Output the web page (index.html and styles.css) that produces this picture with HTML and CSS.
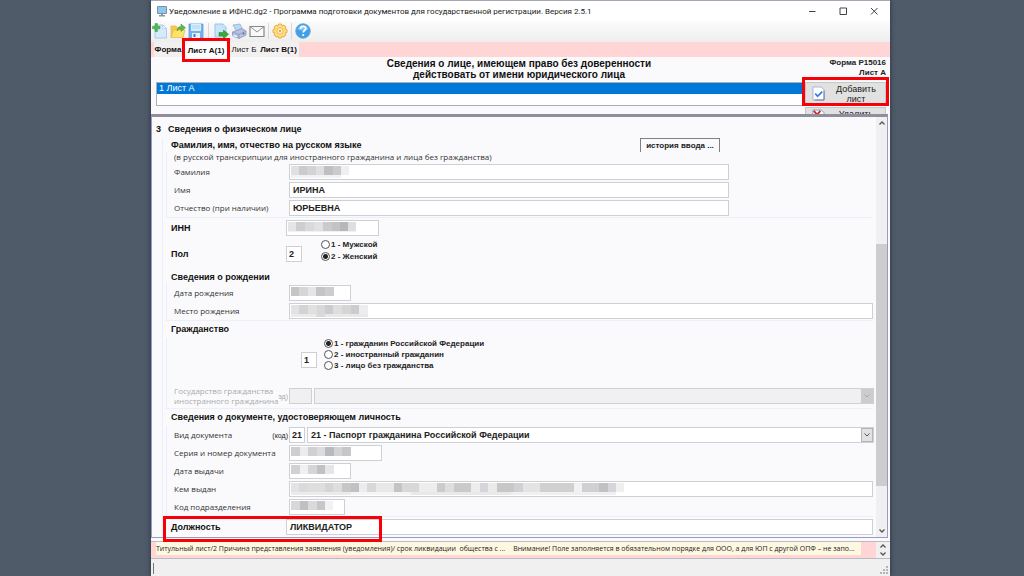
FILE: index.html
```html
<!DOCTYPE html>
<html lang="ru">
<head>
<meta charset="utf-8">
<title>Уведомление в ИФНС.dg2</title>
<link rel="stylesheet" href="styles.css">
</head>
<body>
<main class="window">
  <header class="titlebar">
    <svg class="app-icon" viewBox="0 0 12 12"><rect x="1" y="1" width="10" height="8" rx="1" fill="#7d8fa3"/><rect x="2" y="2" width="8" height="6" fill="#8cc8f4"/><path d="M5 9h2v1h2v1.500H3V10h2z" fill="#8996a5"/></svg>
    <h1 class="caption">Уведомление в ИФНС.dg2 - Программа подготовки документов для государственной регистрации. Версия 2.5.1</h1>
    <div class="win-buttons">
      <button aria-label="Свернуть"><svg viewBox="0 0 8 8"><path d="M1 4.500h6.500"/></svg></button>
      <button aria-label="Развернуть"><svg viewBox="0 0 8 8"><path d="M1 1h6.500v6.500H1z"/></svg></button>
      <button aria-label="Закрыть"><svg viewBox="0 0 8 8"><path d="M1 1l6.500 6.500M7.500 1L1 7.500"/></svg></button>
    </div>
  </header>

  <div class="toolbar">
    <button aria-label="Создать"><svg viewBox="0 0 16 16"><path d="M3 2h8l3.500 3.500V15H3z" fill="#d5ebfb" stroke="#9ac5e4" stroke-width=".8"/><path d="M11 2v3.500h3.500z" fill="#fff" stroke="#9ac5e4" stroke-width=".6"/><path d="M3 .5h2.500v2.800H8v2.500H5.500V8.500H3V5.800H.5V3.300H3z" fill="#4fb856" stroke="#3a9c45" stroke-width=".5"/></svg></button>
    <button aria-label="Открыть"><svg viewBox="0 0 16 16"><path d="M1 3h5l1.500 1.500H13V14H1z" fill="#f2cc50" stroke="#e0b03a" stroke-width=".6"/><path d="M3.500 7H15l-2 7.500H1z" fill="#ffe26e" stroke="#e3b43c" stroke-width=".6"/><path d="M7 8c0-3 2-4.500 4-4.500V1L15.500 4.800 11 8.500V6C9.500 6 8 6.500 7 8z" fill="#5db54c" stroke="#3f9a36" stroke-width=".5"/></svg></button>
    <button aria-label="Сохранить"><svg viewBox="0 0 16 16"><path d="M1 1h14v14H1z" fill="#74b3ea" stroke="#5c9edb" stroke-width=".8"/><path d="M3 1h10v7H3z" fill="#d5edfc"/><path d="M4 3h8M4 5h8" stroke="#a5d0ef" stroke-width=".8"/><path d="M4 10h8v5H4z" fill="#e8f4fc"/><path d="M5.500 11h2v3h-2z" fill="#3c7fbf"/></svg></button>
    <span class="tool-sep tool-sep-wide"></span>
    <button aria-label="Экспорт"><svg viewBox="0 0 16 16"><path d="M2 1h8l3 3v10H2z" fill="#c9e5fa" stroke="#88bbe0" stroke-width=".8"/><path d="M10 1v3h3z" fill="#fff" stroke="#88bbe0" stroke-width=".5"/><path d="M6 9.500h4.500V7l5 4.300-5 4.200V13H6z" fill="#39ac38" stroke="#1c8523" stroke-width=".5"/></svg></button>
    <button aria-label="Печать"><svg viewBox="0 0 16 16"><path d="M2 2l7-1 3 6-6 2z" fill="#b7dbf6" stroke="#8aa9cf" stroke-width=".7"/><path d="M1.500 9L11 5.500 15 8v4l-7 3.500L1.500 12z" fill="#b6c1de" stroke="#8795bf" stroke-width=".8"/><path d="M1.500 9L8 11.500 15 8M8 11.500v4" fill="none" stroke="#8795bf" stroke-width=".7"/><path d="M3 11l4 1.800-1 2.200-4.500-2z" fill="#e5f2fc" stroke="#7e99c6" stroke-width=".5"/><circle cx="12.500" cy="10.500" r=".9" fill="#57679b"/></svg></button>
    <button aria-label="Отправить"><svg viewBox="0 0 16 16"><path d="M1 3.500h14v10H1z" fill="#fafafa" stroke="#858585" stroke-width="1.200"/><path d="M1 3.500l7 5.500 7-5.500" fill="none" stroke="#929292"/></svg></button>
    <span class="tool-sep"></span>
    <button aria-label="Настройки"><svg viewBox="0 0 16 16"><path d="M6.500 1h3l.5 2 2-1 2 2-1 2 2 .5v3l-2 .5 1 2-2 2-2-1-.5 2h-3L6 13l-2 1-2-2 1-2-2-.5v-3L3 6 2 4l2-2 2 1z" fill="#ffdc80" stroke="#e6b04a"/><circle cx="8" cy="8" r="3.200" fill="#fff1bd" stroke="#e6b04a" stroke-width=".8"/><circle cx="8" cy="8" r="1.200" fill="#e5a83a"/></svg></button>
    <span class="tool-sep"></span>
    <button aria-label="Справка"><svg viewBox="0 0 16 16"><circle cx="8" cy="8" r="7.300" fill="#3f9fe9" stroke="#6e9fc6" stroke-width=".8"/><path d="M2.500 6.500a5.700 5.700 0 0 1 11 0C10 8 6 8 2.500 6.500z" fill="#7cc3f7"/><path d="M5.500 6c0-3.500 5.300-3.300 5.300-.5 0 2-2.600 2-2.600 4" fill="none" stroke="#fff" stroke-width="1.700"/><circle cx="8.200" cy="12" r="1.100" fill="#fff"/></svg></button>
  </div>

  <nav class="tabs">
    <button class="tab">Форма</button>
    <button class="tab tab-active">Лист А(1)</button>
    <button class="tab tab-plain">Лист Б</button>
    <button class="tab tab-last">Лист В(1)</button>
  </nav>

  <section class="sheet-head">
    <div class="head-text">
      <h2 class="sheet-title">Сведения о лице, имеющем право без доверенности<br>действовать от имени юридического лица</h2>
      <p class="form-code">Форма Р15016<br>Лист А</p>
    </div>
    <div class="sheets">
      <div class="sheet-list"><div class="sheet-item">1 Лист А</div></div>
      <div class="sheet-actions">
        <div class="marked-button"><button class="action"><svg viewBox="0 0 14 16"><path d="M1 1h9l3 3v11H1z" fill="#fff" stroke="#a5b0d2"/><path d="M13 5v10H3" fill="none" stroke="#6673a6"/><path d="M3.500 8l2.500 3 5-5" fill="none" stroke="#3278e6" stroke-width="1.800"/></svg><span>Добавить лист</span></button></div>
        <button class="action action-delete"><svg viewBox="0 0 14 16"><path d="M1 1h9l3 3v11H1z" fill="#fff" stroke="#8794bd"/><path d="M2 2l7 8M9 2l-7 8" stroke="#db2222" stroke-width="2"/></svg><span>Удалить</span></button>
      </div>
    </div>
  </section>

  <div class="form-panel">
    <form class="form">
      <h3 class="section-title"><span class="section-no">3</span>Сведения о физическом лице</h3>
      <div class="fields">
        <div class="title-row"><h4>Фамилия, имя, отчество на русском языке</h4><button type="button" class="history">история ввода ...</button></div>
        <div class="group">
          <p class="note">(в русской транскрипции для иностранного гражданина и лица без гражданства)</p>
          <div class="row"><label for="surname">Фамилия</label><input id="surname" class="name hidden-surname"></div>
          <div class="row"><label for="name">Имя</label><input id="name" class="name" value="ИРИНА"></div>
          <div class="row"><label for="patronymic">Отчество (при наличии)</label><input id="patronymic" class="name" value="ЮРЬЕВНА"></div>
        </div>
        <div class="row major inn-row"><label for="inn">ИНН</label><input id="inn" class="medium hidden-inn"></div>
        <div class="row major sex-row"><label for="sex">Пол</label><input id="sex" class="code" value="2">
          <div class="radios">
            <label><input type="radio" name="sex">1 - Мужской</label>
            <label><input type="radio" name="sex" checked>2 - Женский</label>
          </div>
        </div>
        <h4>Сведения о рождении</h4>
        <div class="group">
          <div class="row"><label for="birth">Дата рождения</label><input id="birth" class="date hidden-birth"></div>
          <div class="row"><label for="place">Место рождения</label><input id="place" class="wide hidden-place"></div>
        </div>
        <h4 class="tall">Гражданство</h4>
        <div class="group">
          <div class="citizen">
            <input class="code" aria-label="Гражданство" value="1">
            <div class="radios">
              <label><input type="radio" name="cit" checked>1 - гражданин Российской Федерации</label>
              <label><input type="radio" name="cit">2 - иностранный гражданин</label>
              <label><input type="radio" name="cit">3 - лицо без гражданства</label>
            </div>
          </div>
          <div class="row state-row"><label for="state">Государство гражданства иностранного гражданина</label><span class="hint-code">эд)</span><input class="state-code" aria-label="Код государства" disabled>
            <span class="combo"><select id="state" disabled><option></option></select><svg viewBox="0 0 12 14"><rect width="12" height="14" fill="#ccc"/><path d="M3.500 5.500L6 8l2.500-2.500" stroke="#aaa"/></svg></span>
          </div>
        </div>
        <h4 class="tall">Сведения о документе, удостоверяющем личность</h4>
        <div class="group">
          <div class="row"><label for="doc">Вид документа</label><span class="hint-code">(код)</span><input class="code" aria-label="Код документа" value="21">
            <span class="combo"><select id="doc"><option>21 - Паспорт гражданина Российской Федерации</option></select><svg viewBox="0 0 12 14"><rect x=".5" y=".5" width="11" height="13" fill="#e1e1e1" stroke="#b5b5b5"/><path d="M3.500 5.500L6 8l2.500-2.500" stroke="#555"/></svg></span>
          </div>
          <div class="row"><label for="serial">Серия и номер документа</label><input id="serial" class="medium hidden-serial"></div>
          <div class="row"><label for="issued">Дата выдачи</label><input id="issued" class="date hidden-issued"></div>
          <div class="row"><label for="issuer">Кем выдан</label><input id="issuer" class="wide hidden-issuer"></div>
          <div class="row"><label for="dept">Код подразделения</label><input id="dept" class="short hidden-dept"></div>
        </div>
        <div class="row major post-row"><label for="post">Должность</label><input id="post" class="wide" value="ЛИКВИДАТОР"></div>
      </div>
    </form>
    <div class="scrollbar">
      <svg viewBox="0 0 8 6"><path d="M1.500 4.500L4 2l2.500 2.500"/></svg>
      <div class="track"><div class="thumb"></div></div>
      <svg viewBox="0 0 8 6"><path d="M1.500 1.500L4 4l2.500-2.500"/></svg>
    </div>
  </div>

  <div class="messages">
    <p class="message"><span>Титульный лист/2 Причина представления заявления (уведомления)/ срок ликвидации&nbsp; общества с ...</span><span>Внимание! Поле заполняется в обязательном порядке для ООО, а для ЮП с другой ОПФ – не запо...</span></p>
    <div class="spinner">
      <svg viewBox="0 0 8 6"><path d="M1.500 4.500L4 2l2.500 2.500"/></svg>
      <svg viewBox="0 0 8 6"><path d="M1.500 1.500L4 4l2.500-2.500"/></svg>
    </div>
  </div>
  <footer class="statusbar"><span class="status-edge"></span><svg viewBox="0 0 8 8"><path d="M6 0h2v2H6zM3 3h2v2H3zM6 3h2v2H6zM0 6h2v2H0zM3 6h2v2H3zM6 6h2v2H6z" fill="#b5b5b5"/></svg></footer>
</main>
</body>
</html>
```
FILE: styles.css
```css
*, ::before, ::after { box-sizing: border-box; }
body {
  margin: 0;
  padding: 0 134px 0 151px;
  min-height: 100vh;
  display: flex;
  background: #4f5b69;
  font-family: "Liberation Sans", Arial, sans-serif;
  font-size: 8px;
  color: #222;
}
h1, h2, h3, h4, p { margin: 0; }
button, input, select { font: inherit; color: inherit; margin: 0; }
button { padding: 0; border: 0; background: none; }

.window {
  flex: 1;
  min-width: 0;
  display: flex;
  flex-direction: column;
  background: #fafafc;
  border-top: 1px solid #a7a9b9;
  box-shadow: 0 0 5px #26303b;
}

.titlebar { display: flex; align-items: center; height: 20px; padding: 0 1px 0 5px; background: #fff; }
.app-icon { width: 12px; height: 12px; }
.caption { flex: 1; margin-left: 1px; font: 400 8px Roboto, sans-serif; white-space: nowrap; color: #222; }
.win-buttons { display: flex; }
.win-buttons button { width: 31px; height: 20px; display: grid; place-items: center; }
.win-buttons svg { width: 8px; height: 8px; fill: none; stroke: #444; stroke-width: 1; }

.toolbar {
  display: flex;
  align-items: center;
  gap: 2px;
  height: 21px;
  padding: 0 0 2px 1px;
  background: linear-gradient(#fbfbfb, #eeeeee);
}
.toolbar button { width: 16px; height: 16px; }
.toolbar svg { width: 16px; height: 16px; display: block; }
.tool-sep { width: 1px; height: 16px; margin: 0 1px; background: #d8d8d8; }
.tool-sep-wide { margin: 0 2px; }

.tabs { display: flex; height: 15px; padding-left: 3px; background: #ffd5d5; }
.tab { width: 28px; background: #f3f0f0; font-weight: 700; font-size: 8px; white-space: nowrap; color: #111; }
.tab-active {
  position: relative;
  z-index: 2;
  width: 48px;
  height: 24px;
  margin-top: -4px;
  background: #fff;
  border: 3px solid #f80008;
}
.tab-plain { width: 28px; font-weight: 400; }
.tab-last { width: 41px; }

.sheet-head { padding-top: 1px; height: 57px; overflow: hidden; }
.head-text { position: relative; height: 24px; }
.sheet-title { text-align: center; font-size: 10px; line-height: 11px; color: #111; padding-right: 3px; }
.form-code { position: absolute; right: 4px; top: 0; text-align: right; font-weight: 700; line-height: 10px; color: #222; }
.sheets { display: flex; gap: 2px; padding: 0 4px 0 5px; }
.sheet-list { flex: 1; height: 24px; border: 1px solid #a9adb5; background: #fff; }
.sheet-item { height: 11px; padding-left: 2px; background: #0078d7; color: #fff; font-size: 9px; line-height: 11px; }
.sheet-actions { width: 81px; display: flex; flex-direction: column; gap: 2px; }
.action {
  display: flex;
  align-items: center;
  width: 100%;
  height: 23px;
  padding: 0 4px 0 6px;
  gap: 6px;
  background: #e1e1e1;
  border: 1px solid #c6c6c6;
  font-size: 9px;
  line-height: 10px;
}
.action svg { width: 13px; height: 15px; flex: none; }
.action span { flex: 1; }
.action-delete { align-items: flex-start; padding-top: 1px; }
.marked-button { position: relative; }
.marked-button::after {
  content: "";
  position: absolute;
  inset: -5px -3px -1px -3px;
  border: 3px solid #f80008;
}

.form-panel {
  flex: 1;
  display: flex;
  border: 1px solid #9a9ac6;
  border-top: 3px solid #8e8e9e;
  margin-right: 2px;
  background: #fafafc;
}
.form { flex: 1; min-width: 0; padding: 4px 3px 0 0; }
.section-title { height: 17px; line-height: 17px; padding-left: 4px; font-size: 9px; color: #111; }
.section-no { display: inline-block; width: 12px; }
.fields { margin-left: 10px; padding-left: 3px; border-left: 1px solid #e9f0fa; }
h4 { height: 14px; padding-left: 5px; font-size: 9px; line-height: 15px; color: #111; }
h4.tall { height: 17px; line-height: 17px; }
.title-row { display: flex; }
.title-row h4 { flex: 1; }
.history { width: 80px; height: 14px; margin-right: 153px; border: 1px solid #808080; border-bottom: 0; font-size: 8px; font-weight: 700; }
.group { border: 1px solid #e9f0fa; border-top: 0; border-right: 0; padding-left: 7px; }
.note { height: 11px; font: 8px/10px "Open Sans", sans-serif; color: #333; }
.row { display: flex; align-items: center; height: 18px; position: relative; }
.row > label { flex: none; width: 115px; padding-bottom: 1px; font: 8px "Open Sans", sans-serif; color: #333; white-space: nowrap; }
.row.major { padding-left: 5px; }
.row.major > label { font: 700 9px "Liberation Sans", sans-serif; color: #111; }
input:not([type="radio"]), select {
  height: 16px;
  padding: 0 3px;
  border: 1px solid #cfd0d6;
  border-radius: 0;
  background-color: #fff;
  background-repeat: no-repeat;
  background-position: 1px 1px, 1px 9px;
  font-size: 9px;
  font-weight: 700;
  color: #222;
}
.name { width: 440px; }
.medium { width: 93px; }
.date { width: 62px; }
.short { width: 56px; }
.wide { flex: 1; min-width: 0; }
input.code { width: 16px; padding: 0 2px; flex: none; }

/* Masked personal data: a dark band over a paler one */
input.hidden-surname {
  background-image: linear-gradient(90deg, #e0e0e2 0 8px, #cbcbcb 8px 16px, #d3d3d4 16px 25px, #dfdfe0 25px 33px, #bebfc1 33px 42px, #cbcbcb 42px 50px, #efeff1 50px), linear-gradient(90deg, #f2f2f4 0 50px, #fbfbfb 50px);
  background-size: 58px 9px, 50px 4px;
}
input.hidden-inn {
  background-image: linear-gradient(90deg, #e5e5e7 0 8px, #cecece 8px 17px, #d9d9da 17px 26px, #e1e1e3 26px 35px, #cbcbce 35px 44px, #c3c3c4 44px 52px, #b5b7ba 52px 60px, #dfdfdf 60px), linear-gradient(#f1f1f3, #f1f1f3);
  background-size: 68px 9px, 68px 2px;
}
input.hidden-birth {
  background-image: linear-gradient(90deg, #c5c5c6 0 8px, #d6d6d7 8px 17px, #e5e5e7 17px 25px, #c3c4c6 25px 34px, #cdcdcf 34px);
  background-size: 43px 9px;
}
input.hidden-place {
  background-image: linear-gradient(90deg, #e2e2e3 0 8px, #d3d3d4 8px 17px, #e0e0e1 17px 26px, #d8d8d9 26px 34px, #ccccce 34px 42px, #dedede 42px 51px, #d5d5d6 51px 60px, #cbcccd 60px 68px, #ededee 68px), linear-gradient(90deg, #eaeaeb 0 25px, #dadadb 25px 34px, #e8e8e9 34px);
  background-size: 77px 9px, 77px 4px;
}
input.hidden-serial {
  background-image: linear-gradient(90deg, #cecece 0 9px, #ececee 9px 17px, #d0d0d2 17px 26px, #dcdcdd 26px 34px, #b7babf 34px 43px, #d3d3d3 43px 51px, #c6c7c9 51px);
  background-size: 60px 9px;
}
input.hidden-issued {
  background-image: linear-gradient(90deg, #d1d1d2 0 9px, #f0f0f1 9px 17px, #d6d6d7 17px 26px, #bfc1c5 26px 34px, #e6e6e6 34px);
  background-size: 43px 9px;
}
input.hidden-issuer {
  background-image: linear-gradient(90deg, #e3e3e4 0 8px, #dadadb 8px 17px, #dedede 17px 34px, #d5d5d6 34px 42px, #dedede 42px 51px, #c7c7c8 51px 60px, #bfc1c4 60px 68px, #ececee 68px 76px, #d8d8d9 76px 85px, #e8e8e9 85px 103px, #c4c4c5 103px 111px, #d8d8d9 111px 128px, #ededee 128px 146px, #cbcbcc 146px 154px, #dedede 154px 163px, #cacaca 163px 180px, #ededee 180px 189px, #d5d6da 189px 197px, #eaeaeb 197px 206px, #c7c7c8 206px 223px, #d0d1d4 223px 232px, #e4e4e5 232px 249px, #d0d0d1 249px 283px, #f1f1f2 283px 291px, #d0d0d2 291px 308px, #c1c1c3 308px 317px, #d5d6da 317px 325px, #efeff0 325px), linear-gradient(90deg, #ebebec 0 60px, #f5f5f6 60px 120px, #e9e9ea 120px 220px, #f0f0f1 220px);
  background-size: 333px 9px, 325px 4px;
}
input.hidden-dept {
  background-image: linear-gradient(90deg, #d8d8da 0 9px, #bec0c3 9px 17px, #dadadb 17px 26px, #c7c7c9 26px 34px, #f2f2f3 34px);
  background-size: 42px 9px;
}

.row.inn-row { height: 20px; }
.row.sex-row { height: 32px; }
.sex-row .radios { align-self: flex-start; margin-left: 19px; }
.radios label { display: flex; align-items: center; gap: 1px; height: 12px; font-size: 8px; font-weight: 700; }
.citizen .radios label { height: 11px; }
input[type="radio"] {
  appearance: none;
  width: 9px;
  height: 9px;
  border: 1px solid #555;
  border-radius: 50%;
  background: #fff;
}
input[type="radio"]:checked { background: radial-gradient(circle, #222 0 2px, #fff 3px); }
.citizen { display: flex; align-items: flex-start; height: 36px; padding-left: 127px; gap: 7px; }
.citizen .code { align-self: flex-end; margin-bottom: 6px; }
.row.state-row { height: 34px; padding-top: 10px; }
.row.state-row > label { white-space: normal; line-height: 10px; color: #aaa; }
.hint-code { position: absolute; left: 80px; width: 34px; text-align: right; font-size: 7px; }
.state-row .hint-code { color: #aaa; }
input.state-code { width: 23px; }
.combo { position: relative; flex: 1; min-width: 0; display: flex; margin: 0 -1px 0 2px; }
.combo svg { position: absolute; right: 1px; top: 1px; width: 12px; height: 14px; fill: none; pointer-events: none; }
select { appearance: none; width: 100%; }
input:disabled, select:disabled { background-color: #f0f0f0; opacity: 1; }
.row.post-row { height: 20px; }
.post-row::after {
  content: "";
  position: absolute;
  left: -3px;
  top: -1px;
  width: 219px;
  height: 26px;
  border: 3px solid #f80008;
}

.scrollbar { width: 11px; display: flex; flex-direction: column; align-items: center; background: #f0f0f0; }
.scrollbar svg, .spinner svg { width: 8px; height: 6px; fill: none; stroke: #555; stroke-width: 1.3; margin: 3px 0; }
.track { flex: 1; width: 100%; padding-top: 115px; padding-bottom: 39px; }
.thumb { height: 100%; background: #cdcdcd; }

.messages { display: flex; justify-content: space-between; height: 18px; margin-top: 3px; border: 1px solid #b9bcc2; border-left: 0; border-right: 0; background: #ffd5d5; }
.message { display: flex; gap: 8px; height: 13px; min-width: 0; padding-right: 6px; margin-left: 5px; background: #fff8e1; font: 7px/13px "Open Sans", sans-serif; white-space: nowrap; color: #222; }
.spinner { flex: none; display: flex; flex-direction: column; align-items: center; justify-content: center; gap: 2px; width: 14px; background: #f0f0f0; }
.spinner svg { margin: 0; }
.statusbar { display: flex; justify-content: space-between; align-items: flex-end; height: 17px; padding: 2px; background: #f0f0f0; }
.statusbar svg { width: 8px; height: 8px; }
.status-edge { width: 1px; height: 11px; background: #777; }
```
